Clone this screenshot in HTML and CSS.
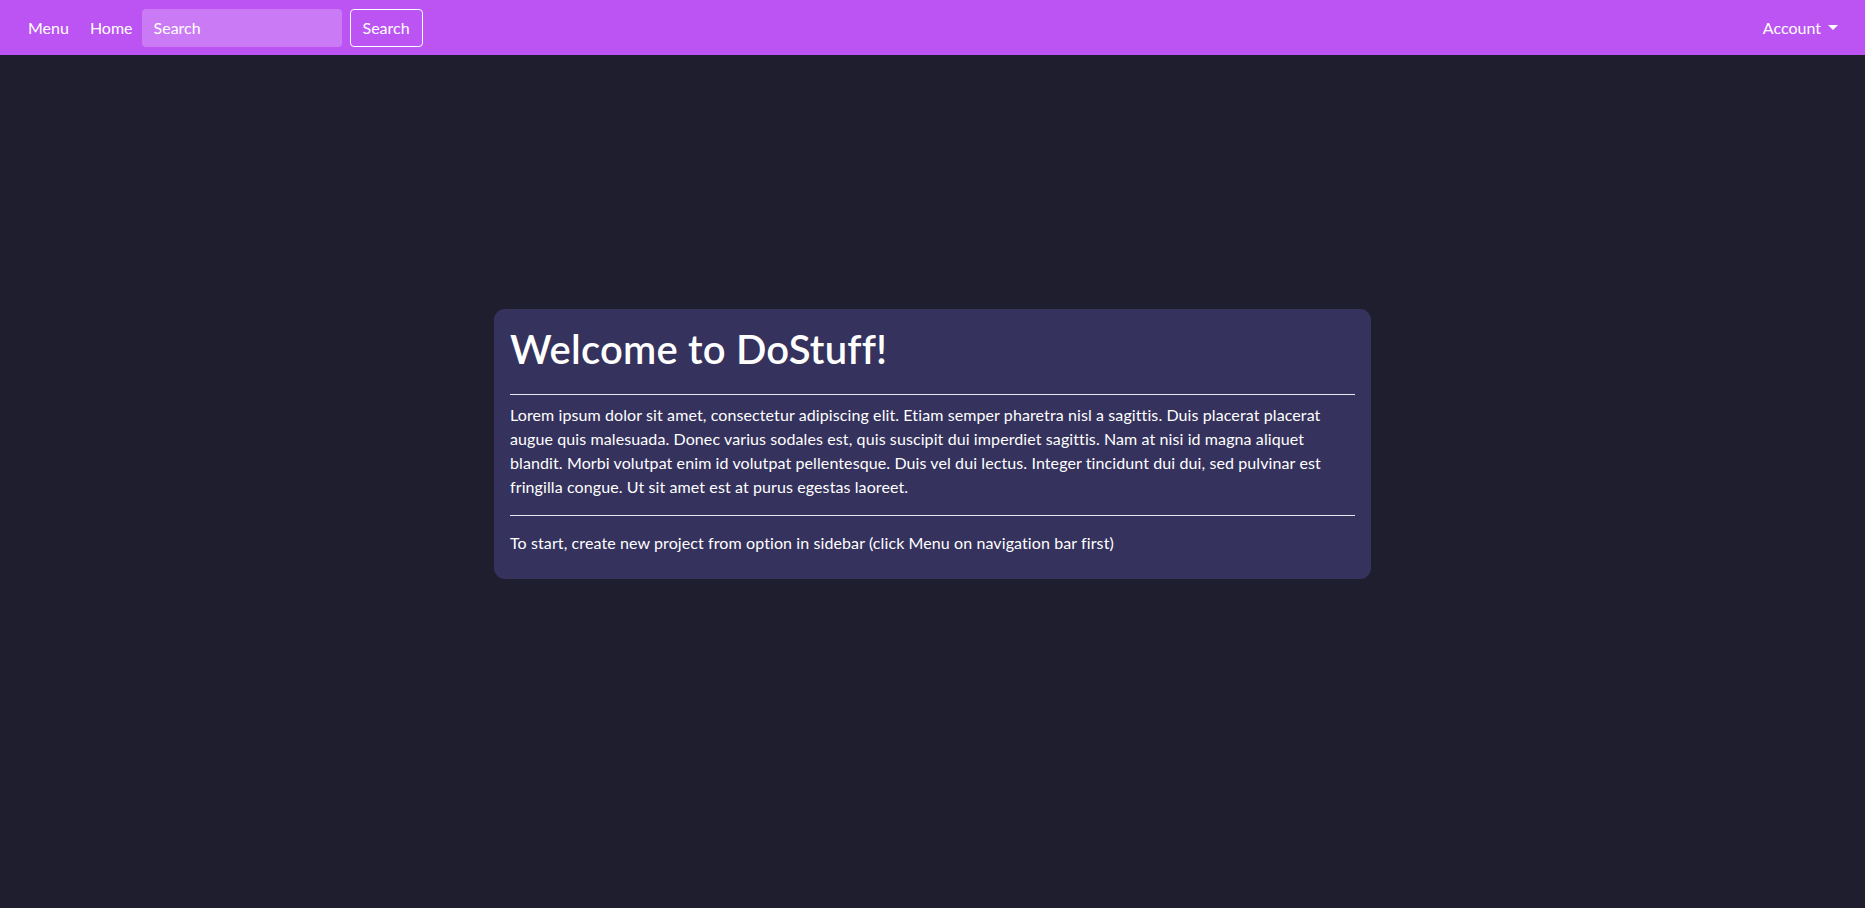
FILE: index.html
```html
<!DOCTYPE html>
<html lang="en">
<head>
<meta charset="utf-8">
<title>DoStuff</title>
<link rel="stylesheet" href="styles.css">
</head>
<body>
<nav class="navbar">
  <div class="nav-left">
    <a class="nav-link menu-link" href="#">Menu</a>
    <a class="nav-link home-link" href="#">Home</a>
    <form class="search-form">
      <input class="search-input" type="text" placeholder="Search">
      <button class="search-btn" type="button">Search</button>
    </form>
  </div>
  <div class="nav-right">
    <a class="nav-link account-link" href="#">Account<span class="caret"></span></a>
  </div>
</nav>
<main class="main">
  <section class="card">
    <h1 class="card-title">Welcome to DoStuff!</h1>
    <hr class="divider">
    <p class="card-text">Lorem ipsum dolor sit amet, consectetur adipiscing elit. Etiam semper pharetra nisl a sagittis. Duis placerat placerat augue quis malesuada. Donec varius sodales est, quis suscipit dui imperdiet sagittis. Nam at nisi id magna aliquet blandit. Morbi volutpat enim id volutpat pellentesque. Duis vel dui lectus. Integer tincidunt dui dui, sed pulvinar est fringilla congue. Ut sit amet est at purus egestas laoreet.</p>
    <hr class="divider divider-second">
    <p class="card-text last">To start, create new project from option in sidebar (click Menu on navigation bar first)</p>
  </section>
</main>
</body>
</html>
```
FILE: styles.css
```css
* { box-sizing: border-box; }
html, body { margin: 0; padding: 0; }
body {
  background: #1f1e2f;
  font-family: "Lato", "Open Sans", sans-serif;
  font-size: 16px;
  line-height: 1.5;
  color: #ffffff;
  min-height: 908px;
}
.navbar {
  height: 55px;
  background: #bb54f2;
  display: flex;
  align-items: center;
  justify-content: space-between;
  padding: 0 27px 0 28px;
}
.nav-left { display: flex; align-items: center; }
.nav-link {
  color: #ffffff;
  text-decoration: none;
  font-size: 16px;
}
.menu-link { margin-right: 21px; }
.home-link { margin-right: 9px; }
.search-form { display: flex; align-items: center; gap: 8px; }
.search-input {
  width: 200px;
  height: 38px;
  border: none;
  border-radius: 4px;
  background: #cb7af5;
  color: #fff;
  padding: 0 12px;
  font-family: inherit;
  font-size: 16px;
  outline: none;
}
.search-input::placeholder { color: #ffffff; opacity: 1; }
.search-btn {
  width: 73px;
  height: 38px;
  border: 1px solid #ffffff;
  border-radius: 4px;
  background: transparent;
  color: #ffffff;
  font-family: inherit;
  font-size: 16px;
  padding: 0;
}
.account-link { display: flex; align-items: center; }
.caret {
  display: inline-block;
  margin-left: 7px;
  width: 0;
  height: 0;
  border-top: 5px solid #ffffff;
  border-left: 5px solid transparent;
  border-right: 5px solid transparent;
}
.main {
  display: flex;
  justify-content: center;
  padding-top: 254px;
}
.card {
  width: 877px;
  background: #35325d;
  border-radius: 11px;
  padding: 16px;
}
.card-title {
  margin: 0;
  font-size: 40px;
  font-weight: 600;
  line-height: 48px;
  letter-spacing: 0.2px;
}
.divider {
  border: none;
  border-top: 1px solid #e8e6f0;
  margin: 21px 0 8px;
}
.divider-second { margin-top: 16px; }
.card-text {
  margin: 0;
  letter-spacing: 0.1px;
}
.card-text.last { margin-top: 15px; margin-bottom: 8px; }
```
